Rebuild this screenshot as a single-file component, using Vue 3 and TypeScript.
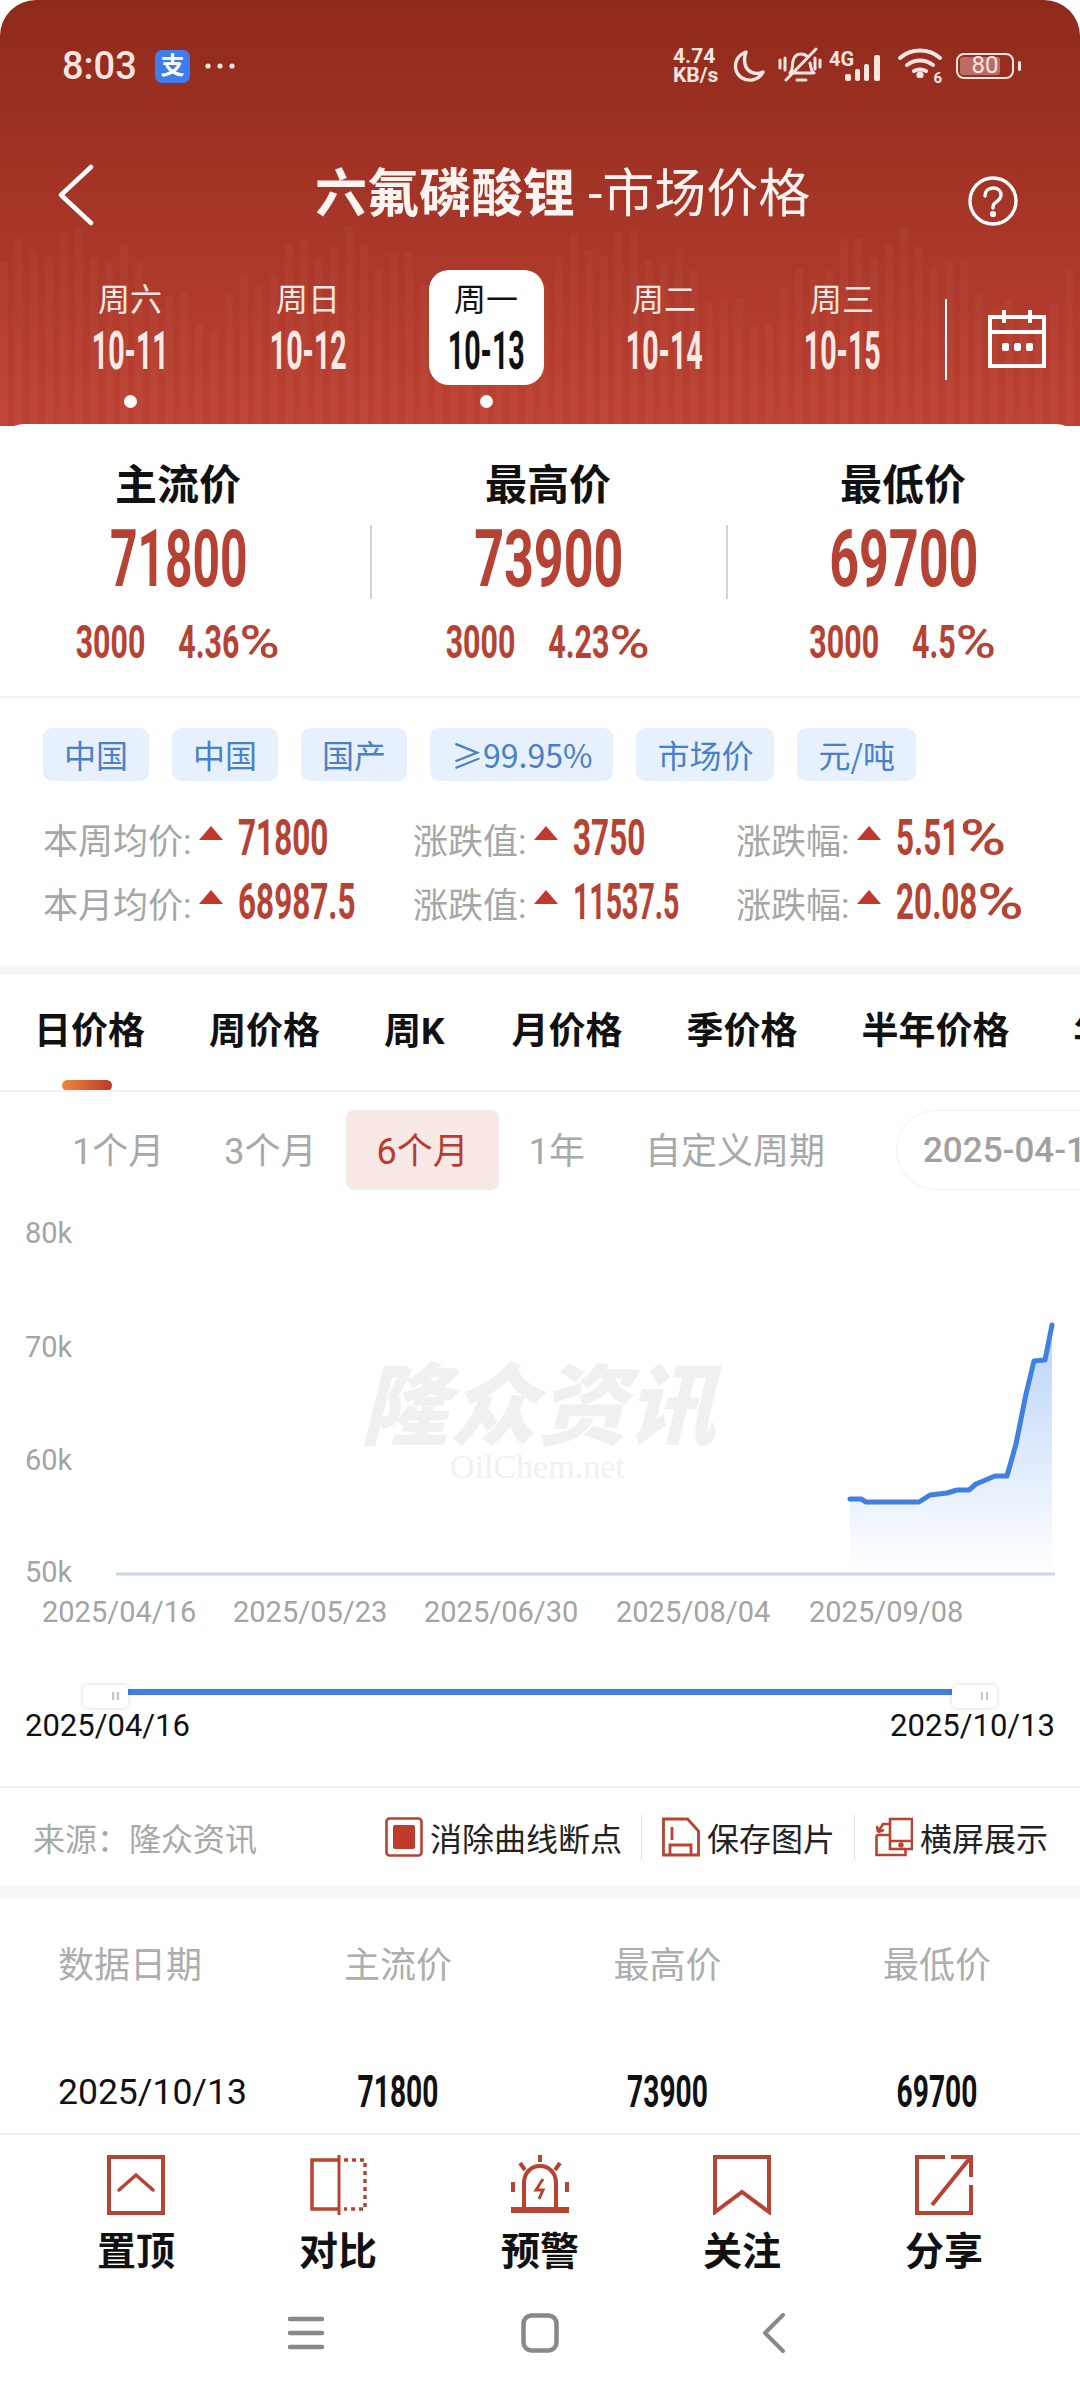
<template>
  <div class="screen">
    <header class="head">
      <div class="bars">
        <i v-for="(h, i) in bars" :key="i" :style="{ height: h + 'px' }"></i>
      </div>

      <div class="status">
        <span class="time">8:03</span>
        <span class="alipay">支</span>
        <svg class="more" width="30" height="6" viewBox="0 0 30 6"><circle cx="3" cy="3" r="2.6" /><circle cx="15" cy="3" r="2.6" /><circle cx="27" cy="3" r="2.6" /></svg>
        <div class="status-right">
          <span class="speed">4.74<br />KB/s</span>
          <svg width="34" height="34" viewBox="0 0 34 34" fill="none" stroke="#fbe5e0" stroke-width="3.4" stroke-linecap="round" stroke-linejoin="round"><path d="M14 3C6 6 2 13 4 21c2 7 9 11 16 10 5-1 9-4 11-8-7 3-14 1-17-5-2-5-2-10 0-15z" /></svg>
          <svg width="44" height="38" viewBox="0 0 44 38" fill="none" stroke="#fbe5e0" stroke-width="3" stroke-linecap="round" stroke-linejoin="round"><path d="M12 26c3-3 2-7 3-12 1-4 4-7 8-7 3 0 5 1 7 3M32 16c1 4 1 8 4 10H15M19 33h9M38 2 8 33M2 13v8M7 11v12M37 11v11M42 13v7" /></svg>
          <div class="net">
            <span class="g4">4G</span>
            <svg width="42" height="28" viewBox="0 0 42 28" fill="#fbe5e0"><rect x="0" y="20" width="6" height="7" rx="2" /><rect x="10" y="15" width="5" height="12" rx="2" /><rect x="19" y="10" width="5" height="17" rx="2" /><rect x="29" y="1" width="6" height="26" rx="2" /></svg>
          </div>
          <div class="wifi">
            <svg width="44" height="30" viewBox="0 0 44 30" fill="none" stroke="#fbe5e0" stroke-width="4" stroke-linecap="round"><path d="M2 10C13 0 31 0 42 10M9 17c8-6 18-6 26 0M16 23c4-2 8-2 12 0" /><circle cx="22" cy="27" r="1.6" fill="#fbe5e0" /></svg>
            <span>6</span>
          </div>
          <div class="battery">
            <span class="fill"></span>
            <span class="pct">80</span>
          </div>
          <span class="nub"></span>
        </div>
      </div>

      <div class="nav">
        <svg width="36" height="62" viewBox="0 0 36 62" fill="none" stroke="#fff" stroke-width="4.5" stroke-linecap="round" stroke-linejoin="round"><path d="M33 3 3 31l30 28" /></svg>
        <h1 class="title"><b>六氟磷酸锂</b> -市场价格</h1>
        <svg class="help" width="50" height="50" viewBox="0 0 50 50" fill="none" stroke="#fff" stroke-width="3.4" stroke-linecap="round"><circle cx="25" cy="25" r="23" /><path d="M17 20c0-5 3-8 8-8s8 3 8 7-3 6-6 8c-2 1-2 3-2 5" /><circle cx="25" cy="38" r="1.4" fill="#fff" /></svg>
      </div>

      <div class="days">
        <div v-for="d in days" :key="d.date" class="day">
          <div class="day-box" :class="{ on: d.active }">
            <span class="week">{{ d.week }}</span>
            <span class="date">{{ d.date }}</span>
          </div>
          <i v-if="d.dot" class="dot"></i>
        </div>
        <span class="day-line"></span>
        <svg class="cal" width="58" height="58" viewBox="0 0 58 58" fill="none" stroke="#fff" stroke-width="4"><rect x="2" y="7" width="54" height="49" /><path d="M2 22h54M16 0v13M42 0v13" /><g fill="#fff" stroke="none"><rect x="14" y="33" width="7" height="8" rx="2" /><rect x="26" y="33" width="7" height="8" rx="2" /><rect x="38" y="33" width="7" height="8" rx="2" /></g></svg>
      </div>
    </header>

    <section class="prices">
      <div v-for="p in prices" :key="p.label" class="price">
        <div class="price-label">{{ p.label }}</div>
        <div class="price-value"><span>{{ p.value }}</span></div>
        <div class="price-change"><span>{{ p.diff }}</span><span>{{ p.rate }}<em>%</em></span></div>
      </div>
    </section>

    <section class="info">
      <div class="tags">
        <span v-for="(t, i) in tags" :key="i" class="tag">{{ t }}</span>
      </div>
      <div class="stats">
        <div v-for="s in stats" :key="s.label + s.value" class="stat">
          <span class="stat-label">{{ s.label }}:</span>
          <i class="up"></i>
          <span class="stat-value" :class="{ tight: s.value.startsWith('11') }">{{ s.value }}<em v-if="s.pct">%</em></span>
        </div>
      </div>
    </section>

    <div class="gap gap-a"></div>

    <nav class="tabs">
      <span v-for="(t, i) in tabs" :key="t" class="tab" :class="{ on: i === 0 }">{{ t }}</span>
    </nav>

    <div class="ranges">
      <span v-for="r in ranges" :key="r" class="range" :class="{ on: r === '6个月' }">{{ r }}</span>
      <span class="range-date">2025-04-16</span>
    </div>

    <svg class="chart" width="1080" height="440" viewBox="0 0 1080 440">
      <defs>
        <linearGradient id="area" x1="0" y1="0" x2="0" y2="1">
          <stop offset="0" stop-color="#b9d4f8" />
          <stop offset="1" stop-color="#ffffff" />
        </linearGradient>
      </defs>
      <text class="mark" x="360" y="238">隆众资讯</text>
      <text class="mark-en" x="450" y="278">OilChem.net</text>
      <text v-for="y in yAxis" :key="y.t" class="y-label" x="25" :y="y.y">{{ y.t }}</text>
      <path :d="areaPath" fill="url(#area)" />
      <path d="M116 374H1055" stroke="#c9d6e8" stroke-width="3" />
      <path :d="linePath" fill="none" stroke="#3f80e0" stroke-width="5" stroke-linejoin="round" stroke-linecap="round" />
      <text v-for="x in xAxis" :key="x.t" class="x-label" :x="x.x" y="422">{{ x.t }}</text>
    </svg>

    <div class="slider">
      <div class="track">
        <span class="handle"></span>
        <span class="rail"></span>
        <span class="handle"></span>
      </div>
      <div class="ends"><span>2025/04/16</span><span>2025/10/13</span></div>
    </div>

    <div class="source">
      <span class="from">来源：隆众资讯</span>
      <div class="tools">
        <div class="tool">
          <svg width="38" height="40" viewBox="0 0 38 40" fill="none" stroke="#b84333" stroke-width="2.6"><rect x="1.5" y="1.5" width="35" height="37" rx="3" /><rect x="8" y="8" width="22" height="24" rx="2" fill="#c23a2a" stroke="none" /></svg>
          <span>消除曲线断点</span>
        </div>
        <i class="tool-line"></i>
        <div class="tool">
          <svg width="38" height="40" viewBox="0 0 38 40" fill="none" stroke="#b84333" stroke-width="2.8"><path d="M1.500 2h24L36.500 14v24h-35zM10 10v13M8 38V28h21v10" /></svg>
          <span>保存图片</span>
        </div>
        <i class="tool-line"></i>
        <div class="tool">
          <svg width="38" height="40" viewBox="0 0 38 40" fill="none" stroke="#b84333" stroke-width="2.6"><rect x="15" y="2" width="22" height="30" /><path d="M15 24h22M1.500 18v20h29v-6M1.500 18h13M3 15l5-8h6M3 15l-1-6M3 15l6-2" /><circle cx="26" cy="28" r="1.400" fill="#b84333" /></svg>
          <span>横屏展示</span>
        </div>
      </div>
    </div>

    <div class="gap gap-b"></div>

    <section class="table">
      <div class="row thead">
        <span class="first">数据日期</span><span>主流价</span><span>最高价</span><span>最低价</span>
      </div>
      <div class="row tbody">
        <span class="first">2025/10/13</span><b>71800</b><b>73900</b><b>69700</b>
      </div>
    </section>

    <footer class="actions">
      <div class="action">
        <svg width="58" height="60" viewBox="0 0 58 60" fill="none" stroke="#b84333" stroke-width="4"><path d="M2 2h54v56H2z" /><path d="M12 35 29 20l17 15" stroke-linecap="round" stroke-width="3.500" /></svg>
        <span>置顶</span>
      </div>
      <div class="action">
        <svg width="58" height="60" viewBox="0 0 58 60" fill="none" stroke="#b84333" stroke-width="3.500"><path d="M30 5H3v49h27" /><path d="M30 0v60" stroke-width="3" /><path d="M35 5h21v49H35" stroke-dasharray="4 4" /></svg>
        <span>对比</span>
      </div>
      <div class="action">
        <svg width="58" height="60" viewBox="0 0 58 60" fill="none" stroke="#b84333" stroke-width="4"><path d="M13 52V28c0-10 7-17 16-17s16 7 16 17v24" /><path d="M1 55h56" stroke-width="6" stroke-linecap="round" /><path d="M29 0v7M9 8l5 7M49 8l-5 7M2 27v10M56 27v10" stroke-width="4" /><path d="M32 24l-7 11h7l-4 9" stroke-width="3" /></svg>
        <span>预警</span>
      </div>
      <div class="action">
        <svg width="58" height="60" viewBox="0 0 58 60" fill="none" stroke="#b84333" stroke-width="4"><path d="M2 2h54v55L29 37 2 57z" /></svg>
        <span>关注</span>
      </div>
      <div class="action">
        <svg width="58" height="60" viewBox="0 0 58 60" fill="none" stroke="#b84333" stroke-width="4"><path d="M30 2H2v56h54V30M56 22V2H36M55 3 17 50" /></svg>
        <span>分享</span>
      </div>
    </footer>

    <div class="sysnav">
      <div class="sys">
        <svg width="36" height="34" viewBox="0 0 36 34" fill="none" stroke="#888" stroke-width="4.500" stroke-linecap="round"><path d="M2 3h32M2 17h32M2 31h32" /></svg>
      </div>
      <div class="sys">
        <svg width="38" height="40" viewBox="0 0 38 40" fill="none" stroke="#888" stroke-width="4.500"><rect x="2.500" y="2.500" width="33" height="35" rx="8" /></svg>
      </div>
      <div class="sys">
        <svg width="24" height="40" viewBox="0 0 24 40" fill="none" stroke="#888" stroke-width="4" stroke-linecap="round" stroke-linejoin="round"><path d="M21 2 3 20l18 18" /></svg>
      </div>
    </div>
  </div>
</template>

<script setup lang="ts">
const bars = Array.from({ length: 72 }, (_, i) => {
  const wave = Math.abs(Math.sin((i + 5) * 0.172))
  return Math.round(100 + wave * 85 + Math.sin(i * 1.7) * 16)
})

const days = [
  { week: '周六', date: '10-11', dot: true, active: false },
  { week: '周日', date: '10-12', dot: false, active: false },
  { week: '周一', date: '10-13', dot: true, active: true },
  { week: '周二', date: '10-14', dot: false, active: false },
  { week: '周三', date: '10-15', dot: false, active: false }
]

const prices = [
  { label: '主流价', value: '71800', diff: '3000', rate: '4.36' },
  { label: '最高价', value: '73900', diff: '3000', rate: '4.23' },
  { label: '最低价', value: '69700', diff: '3000', rate: '4.5' }
]

const tags = ['中国', '中国', '国产', '≥99.95%', '市场价', '元/吨']

const stats = [
  { label: '本周均价', value: '71800', pct: false },
  { label: '涨跌值', value: '3750', pct: false },
  { label: '涨跌幅', value: '5.51', pct: true },
  { label: '本月均价', value: '68987.5', pct: false },
  { label: '涨跌值', value: '11537.5', pct: false },
  { label: '涨跌幅', value: '20.08', pct: true }
]

const tabs = ['日价格', '周价格', '周K', '月价格', '季价格', '半年价格', '年价格']
const ranges = ['1个月', '3个月', '6个月', '1年', '自定义周期']

const yAxis = [
  { t: '80k', y: 43 },
  { t: '70k', y: 157 },
  { t: '60k', y: 270 },
  { t: '50k', y: 382 }
]

const xAxis = [
  { t: '2025/04/16', x: 42 },
  { t: '2025/05/23', x: 233 },
  { t: '2025/06/30', x: 424 },
  { t: '2025/08/04', x: 616 },
  { t: '2025/09/08', x: 809 }
]

// chart points, y measured from the top of the svg
const points: [number, number][] = [
  [850, 299], [861, 299], [866, 302], [919, 302], [930, 295], [947, 293], [957, 290],
  [969, 290], [976, 284], [995, 276], [1007, 276], [1016, 244], [1026, 194], [1034, 161],
  [1045, 160], [1052, 125]
]
const linePath = 'M' + points.map(p => p.join(' ')).join('L')
const areaPath = linePath + 'L1052 374L850 374Z'
</script>

<style>
html,
body {
  margin: 0;
  background: #fff;
}
</style>

<style scoped>
.screen {
  width: 1080px;
  height: 2400px;
  overflow: hidden;
  background: #fff;
  font-family: Roboto, "Noto Sans CJK SC", sans-serif;
  color: #111;
}

.head {
  position: relative;
  height: 426px;
  border-radius: 36px 36px 0 0;
  background: linear-gradient(#8f2a1c, #bd4132);
  overflow: hidden;
}

.bars {
  position: absolute;
  left: 0;
  right: 0;
  bottom: 0;
  display: flex;
  align-items: flex-end;
  gap: 7px;
}

.bars i {
  flex: 0 0 8px;
  background: rgba(255, 255, 255, 0.032);
}

.status,
.nav,
.days {
  position: relative;
}

.status {
  height: 132px;
  display: flex;
  align-items: center;
  padding-left: 62px;
  color: #fbe5e0;
}

.time {
  font-size: 38px;
  font-weight: 500;
  width: 93px;
}

.alipay {
  width: 35px;
  height: 33px;
  border-radius: 7px;
  background: #3e7df0;
  color: #fff;
  font-size: 24px;
  font-weight: 700;
  line-height: 33px;
  text-align: center;
}

.more {
  margin-left: 15px;
  fill: #fbe5e0;
}

.status-right {
  position: absolute;
  left: 673px;
  top: 46px;
  display: flex;
  align-items: center;
  height: 40px;
}

.speed {
  width: 59px;
  font-size: 21px;
  font-weight: 700;
  line-height: 19px;
  white-space: nowrap;
}

.status-right > svg:nth-child(3) {
  margin-left: 12px;
}

.net {
  position: relative;
  width: 58px;
  height: 40px;
  margin-left: 7px;
}

.g4 {
  position: absolute;
  left: 0;
  top: 3px;
  font-size: 20px;
  font-weight: 700;
  line-height: 20px;
}

.net svg {
  position: absolute;
  left: 16px;
  top: 8px;
}

.wifi {
  position: relative;
  width: 44px;
  height: 36px;
  margin-left: 11px;
}

.wifi span {
  position: absolute;
  right: 0;
  bottom: -3px;
  font-size: 15px;
  font-weight: 700;
}

.battery {
  position: relative;
  width: 58px;
  height: 26px;
  margin-left: 14px;
  box-sizing: border-box;
  border: 2.5px solid #fbe5e0;
  border-radius: 8px;
}

.fill {
  position: absolute;
  left: 2px;
  top: 2px;
  bottom: 2px;
  width: 40px;
  border-radius: 3px;
  background: rgba(251, 229, 224, 0.35);
}

.pct {
  position: absolute;
  inset: 0;
  font-size: 24px;
  line-height: 21px;
  text-align: center;
}

.nub {
  width: 3px;
  height: 10px;
  margin-left: 4px;
  border-radius: 2px;
  background: #fbe5e0;
}

.nav {
  height: 126px;
  display: flex;
  align-items: center;
  padding-left: 58px;
  color: #fff;
}

.title {
  margin: 0 0 0 221px;
  font-size: 52px;
  font-weight: 400;
  line-height: 60px;
  white-space: nowrap;
  color: #fdf3f0;
}

.title b {
  font-weight: 700;
}

.help {
  margin-left: auto;
  margin-right: 62px;
  position: relative;
  top: 6px;
}

.days {
  display: flex;
  align-items: flex-start;
  padding: 12px 0 0 41px;
}

.day {
  width: 178px;
  display: flex;
  flex-direction: column;
  align-items: center;
}

.day-box {
  width: 115px;
  height: 115px;
  box-sizing: border-box;
  padding-top: 8px;
  border-radius: 20px;
  display: flex;
  flex-direction: column;
  align-items: center;
  color: #fbe9e5;
}

.day-box.on {
  background: #fff;
  color: #111;
}

.week {
  font-size: 32px;
  line-height: 44px;
}

.date {
  font-size: 53px;
  font-weight: 700;
  line-height: 58px;
  white-space: nowrap;
  transform: scaleX(0.54);
}

.dot {
  width: 13px;
  height: 13px;
  margin-top: 10px;
  border-radius: 50%;
  background: #fff;
}

.day-line {
  width: 2px;
  height: 81px;
  margin: 29px 0 0 14px;
  background: #fff;
}

.cal {
  margin: 40px 0 0 41px;
}

.prices {
  position: relative;
  margin-top: -2px;
  height: 274px;
  box-sizing: border-box;
  padding-top: 32px;
  border-radius: 24px 24px 0 0;
  background: #fff;
  display: grid;
  grid-template-columns: 370px 356px 354px;
  border-bottom: 2px solid #f2f2f2;
}

.price:first-child .price-label,
.price:first-child .price-change {
  margin-right: 14px;
}

.price:first-child .price-value {
  padding-right: 14px;
  border-left-color: transparent;
}

.price-label {
  height: 60px;
  font-size: 42px;
  font-weight: 700;
  line-height: 60px;
  text-align: center;
}

.price-value {
  height: 74px;
  margin-top: 9px;
  border-left: 2px solid #d4d4d4;
  text-align: center;
  color: #b64233;
  font-size: 80px;
  font-weight: 700;
  line-height: 68px;
}

.price-value span {
  display: inline-block;
  transform: scaleX(0.65);
}

.price:first-child .price-value span {
  transform: scaleX(0.6);
}

.price-change {
  height: 50px;
  margin-top: 20px;
  display: flex;
  justify-content: center;
  gap: 50px;
  color: #b64233;
  font-size: 46px;
  font-weight: 700;
  line-height: 46px;
  transform: scaleX(0.66);
  white-space: nowrap;
}

.price-change em {
  display: inline-block;
  width: 62px;
  font-style: normal;
  font-weight: 500;
  transform: scaleX(1.8);
  transform-origin: left center;
}

.info {
  height: 268px;
  box-sizing: border-box;
  padding: 30px 0 0 43px;
}

.tags {
  display: flex;
  gap: 23px;
}

.tag {
  height: 53px;
  padding: 0 21px;
  border-radius: 9px;
  background: #e6f1fd;
  color: #4a80c8;
  font-family: "Noto Sans CJK SC", sans-serif;
  font-size: 32px;
  line-height: 53px;
}

.stats {
  margin-top: 25px;
  display: grid;
  grid-template-columns: 370px 323px 1fr;
  grid-auto-rows: 64px;
}

.stat {
  display: flex;
  align-items: center;
  white-space: nowrap;
}

.stat-label {
  color: #a6a6a6;
  font-size: 35px;
}

.up {
  width: 0;
  height: 0;
  margin: 0 15px 10px 8px;
  border-left: 12px solid transparent;
  border-right: 12px solid transparent;
  border-bottom: 14px solid #c0392b;
}

.stat-value {
  display: inline-block;
  color: #b64233;
  font-size: 50px;
  font-weight: 700;
  transform: scaleX(0.63);
  transform-origin: left center;
}

.stat-value.tight {
  transform: scaleX(0.57);
}

.stat-value em {
  display: inline-block;
  width: 78px;
  font-style: normal;
  font-weight: 500;
  transform: scaleX(2);
  transform-origin: left center;
}

.gap {
  background: #f7f7f7;
}

.gap-a {
  height: 9px;
}

.gap-b {
  height: 13px;
}

.tabs {
  height: 117px;
  box-sizing: border-box;
  padding: 30px 0 0 34px;
  display: flex;
  gap: 64px;
  overflow: hidden;
  border-bottom: 2px solid #f2f2f2;
}

.tab {
  position: relative;
  flex: none;
  height: 54px;
  font-size: 37px;
  font-weight: 700;
  line-height: 54px;
}

.tab:nth-child(3) {
  padding-right: 3px;
}

.tab.on::after {
  content: "";
  position: absolute;
  left: 28px;
  top: 75px;
  width: 50px;
  height: 11px;
  border-radius: 6px;
  background: linear-gradient(90deg, #e88a3a, #c0392b);
}

.ranges {
  height: 108px;
  box-sizing: border-box;
  padding: 18px 0 0 72px;
  display: flex;
  gap: 60px;
  overflow: hidden;
  white-space: nowrap;
}

.range {
  flex: none;
  height: 80px;
  color: #a8a8a8;
  font-size: 36px;
  line-height: 84px;
}

.range.on {
  margin: 0 -30px;
  padding: 0 30px;
  border-radius: 8px;
  background: #f8e9e7;
  color: #b83d2f;
}

.range-date {
  flex: none;
  height: 78px;
  margin-left: 11px;
  padding: 0 60px 0 26px;
  border: 1px solid #efefef;
  border-radius: 40px;
  color: #a0a0a0;
  font-size: 35px;
  font-weight: 500;
  line-height: 80px;
}

.chart {
  display: block;
}

.mark {
  font-size: 89px;
  font-weight: 900;
  font-style: italic;
  fill: #f0f0f0;
}

.mark-en {
  font-family: "Liberation Serif", serif;
  font-size: 34px;
  fill: #f1f1f1;
}

.y-label,
.x-label {
  font-size: 29px;
  fill: #a4a4a4;
}

.slider {
  height: 148px;
  box-sizing: border-box;
  padding-top: 45px;
  border-bottom: 2px solid #f2f2f2;
}

.track {
  display: flex;
  align-items: flex-start;
  height: 23px;
  padding: 0 83px;
}

.rail {
  flex: 1;
  height: 6px;
  margin-top: 4px;
  background: #4080e0;
}

.handle {
  position: relative;
  width: 45px;
  height: 23px;
  border-radius: 5px;
  background: #fff;
  box-shadow: 0 0 5px rgba(0, 0, 0, 0.16);
}

.handle::after {
  content: "";
  position: absolute;
  left: 29px;
  top: 7px;
  width: 3px;
  height: 8px;
  border-left: 2px solid #c4c4c4;
  border-right: 2px solid #c4c4c4;
}

.ends {
  display: flex;
  justify-content: space-between;
  padding: 0 25px;
  margin-top: -2px;
  font-size: 31px;
  line-height: 40px;
  color: #111;
}

.source {
  height: 97px;
  display: flex;
  align-items: center;
  padding: 0 32px 0 33px;
}

.from {
  color: #a8a8a8;
  font-size: 32px;
}

.tools {
  margin-left: auto;
  display: flex;
  align-items: center;
}

.tool {
  display: flex;
  align-items: center;
  gap: 7px;
  font-size: 32px;
  color: #222;
}

.tool-line {
  width: 1px;
  height: 44px;
  margin: 0 19.5px;
  background: #dcdcdc;
}

.table {
  height: 237px;
  padding-top: 36px;
  border-bottom: 2px solid #f0f0f0;
  box-sizing: border-box;
}

.row {
  display: grid;
  grid-template-columns: 206px 268px 271px 268px;
  padding-left: 58px;
  text-align: center;
}

.first {
  text-align: left;
  white-space: nowrap;
}

.thead {
  height: 64px;
  font-size: 36px;
  line-height: 64px;
  color: #adadad;
}

.tbody {
  height: 64px;
  margin-top: 62px;
  font-size: 35.5px;
  line-height: 64px;
}

.tbody b {
  font-size: 44px;
  font-weight: 700;
  transform: scaleX(0.64);
}

.actions {
  height: 150px;
  box-sizing: border-box;
  padding: 20px 35px 0;
  display: flex;
}

.action {
  width: 202px;
  display: flex;
  flex-direction: column;
  align-items: center;
  font-size: 39px;
  font-weight: 700;
  line-height: 58px;
}

.action span {
  margin-top: 8px;
}

.sysnav {
  height: 110px;
  padding-top: 3px;
  display: flex;
  justify-content: center;
}

.sys {
  width: 234px;
  height: 90px;
  display: flex;
  align-items: center;
  justify-content: center;
}
</style>
